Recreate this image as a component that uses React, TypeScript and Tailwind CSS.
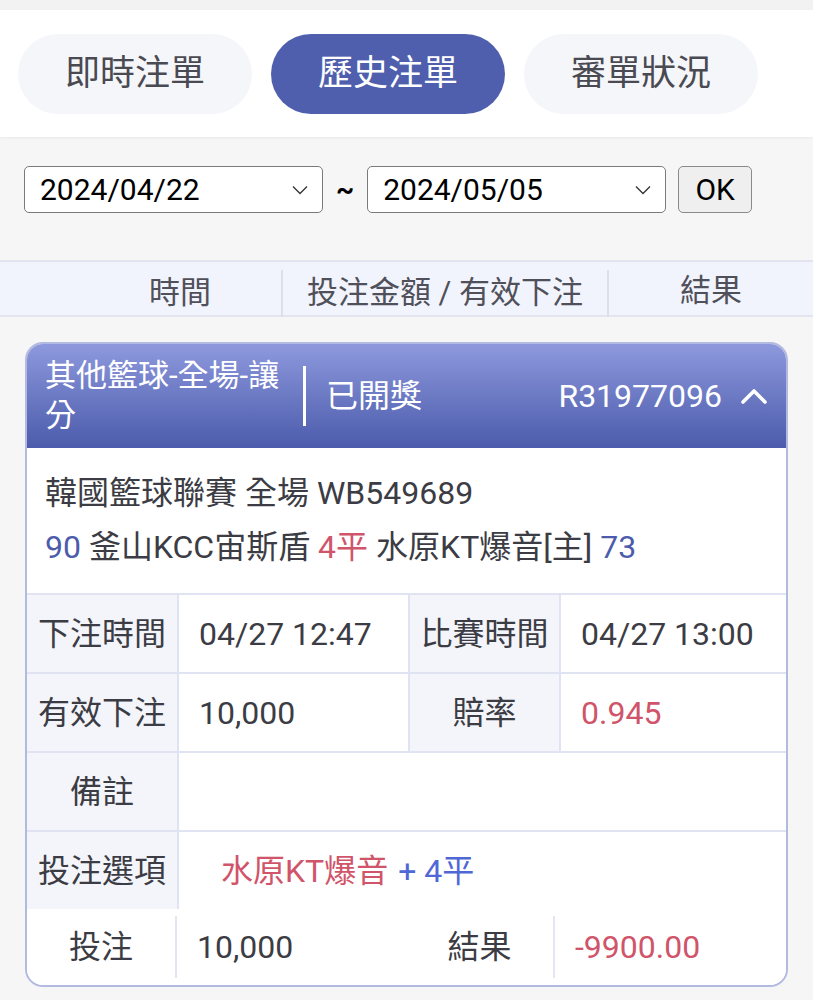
import { ReactNode } from "react";

const font = { fontFamily: 'Roboto, "Noto Sans CJK TC", sans-serif' };

function Tab({ label, active }: { label: string; active?: boolean }) {
  return (
    <div
      className={
        "flex h-[80px] w-[234px] items-center justify-center rounded-full text-[35px] " +
        (active ? "bg-[#4f5fad] text-white" : "bg-[#f5f6fa] text-[#4a4a52]")
      }
    >
      {label}
    </div>
  );
}

function DateSelect({ value }: { value: string }) {
  return (
    <div className="flex h-[47px] w-[299px] items-center justify-between rounded-[5px] border-[1.5px] border-[#7a7a7a] bg-white pl-[15px] pr-[14px] text-[30px] text-black">
      <span>{value}</span>
      <svg width="16" height="10" viewBox="0 0 16 10" fill="none">
        <path d="M1 1.5 L8 8.5 L15 1.5" stroke="#333" strokeWidth="1.3" />
      </svg>
    </div>
  );
}

function Label({ children }: { children: ReactNode }) {
  return <div className="flex items-center justify-center bg-[#f3f5fb] text-[#3c3c44]">{children}</div>;
}

function Value({ children, className = "" }: { children?: ReactNode; className?: string }) {
  return <div className={"flex items-center bg-white pl-[20px] text-[#3c3c44] " + className}>{children}</div>;
}

export default function App() {
  return (
    <div className="min-h-screen bg-[#f6f6f7]" style={font}>
      <div className="h-[10px] bg-[#f2f2f3]" />
      <header className="flex gap-[19px] bg-white px-[18px] pt-[24px] pb-[23px] shadow-[0_1px_3px_rgba(0,0,0,0.06)]">
        <Tab label="即時注單" />
        <Tab label="歷史注單" active />
        <Tab label="審單狀況" />
      </header>

      <div className="flex items-center px-[24px] pt-[29px]">
        <DateSelect value="2024/04/22" />
        <span className="mx-[13px] text-[28px] font-bold text-black">~</span>
        <DateSelect value="2024/05/05" />
        <div className="ml-[12px] flex h-[47px] w-[74px] items-center justify-center rounded-[5px] border-[1.5px] border-[#8a8a8a] bg-[#efefef] text-[30px] text-black">
          OK
        </div>
      </div>

      <div className="mt-[47px] grid h-[57px] grid-cols-[283px_326px_1fr] border-y-2 border-[#e2e4f0] bg-[#f1f4fc] pb-[4px] text-[31px] text-[#50505a]">
        <div className="mt-[8px] mb-[4px] flex items-center justify-end border-r-2 border-[#dcdfea] pr-[70px]">時間</div>
        <div className="mt-[8px] mb-[4px] flex items-center justify-center border-r-2 border-[#dcdfea]">投注金額 / 有效下注</div>
        <div className="flex items-center justify-center">結果</div>
      </div>

      <div className="mx-[25px] mt-[25px] overflow-hidden rounded-[18px] border-2 border-[#b3badf] bg-white text-[32px]">
        <div className="flex items-center bg-gradient-to-b from-[#8e99dd] to-[#4c5bab] py-[12px] pl-[18px] pr-[18px] text-white">
          <div className="w-[258px] text-[31px] leading-[40px]">其他籃球-全場-讓分</div>
          <div className="h-[60px] w-[3px] bg-white" />
          <div className="ml-[20px] flex-1">已開獎</div>
          <div>R31977096</div>
          <svg className="ml-[18px]" width="28" height="18" viewBox="0 0 28 18" fill="none">
            <path d="M3 15 L14 4 L25 15" stroke="white" strokeWidth="3.6" strokeLinecap="round" strokeLinejoin="round" />
          </svg>
        </div>

        <div className="px-[18px] pt-[18px] pb-[19px] leading-[54px] text-[#3c3c44]">
          <div>韓國籃球聯賽 全場 WB549689</div>
          <div>
            <span className="text-[#4c5bab]">90</span> 釜山KCC宙斯盾{" "}
            <span className="text-[#d0546a]">4平</span> 水原KT爆音[主]{" "}
            <span className="text-[#4c5bab]">73</span>
          </div>
        </div>

        <div className="grid grid-cols-[150px_229px_149px_1fr] gap-[2px] bg-[#dfe3f2] pt-[2px]">
          <Label>下注時間</Label>
          <Value className="h-[77px]">04/27 12:47</Value>
          <Label>比賽時間</Label>
          <Value>04/27 13:00</Value>

          <Label>有效下注</Label>
          <Value className="h-[77px]">10,000</Value>
          <Label>賠率</Label>
          <Value className="text-[#d0546a]">0.945</Value>

          <Label>備註</Label>
          <Value className="col-span-3 h-[77px]" />

          <Label>投注選項</Label>
          <Value className="col-span-3 h-[77px] pl-[42px]">
            <span className="text-[#d0546a]">水原KT爆音</span>
            <span className="ml-[10px] text-[#4f68d6]">+ 4平</span>
          </Value>
        </div>
        <div className="grid h-[76px] grid-cols-[150px_229px_149px_1fr] items-center bg-white text-[#3c3c44]">
          <div className="flex h-[62px] items-center justify-center border-r-2 border-[#e3e6f2]">投注</div>
          <div className="pl-[20px]">10,000</div>
          <div className="flex h-[62px] items-center justify-center border-r-2 border-[#e3e6f2]">結果</div>
          <div className="pl-[20px] text-[#d0546a]">-9900.00</div>
        </div>
      </div>
    </div>
  );
}
